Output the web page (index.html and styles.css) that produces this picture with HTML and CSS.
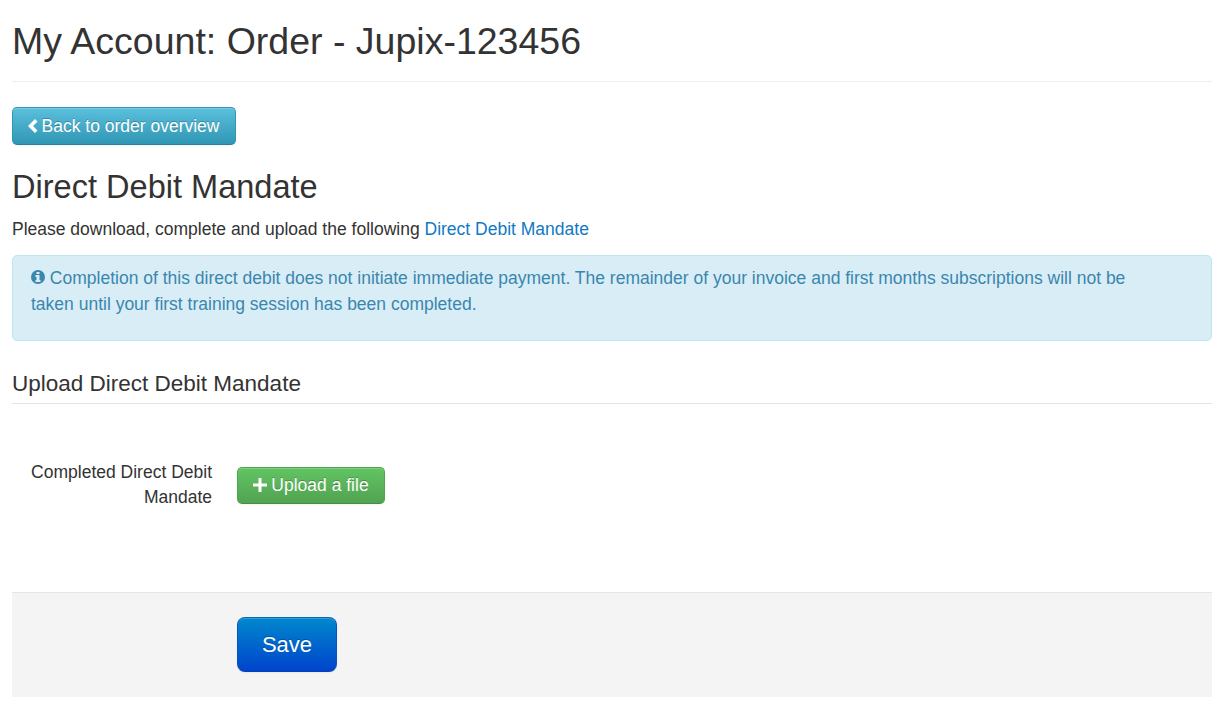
FILE: index.html
```html
<!DOCTYPE html>
<html lang="en">
<head>
    <meta charset="UTF-8">
    <meta name="viewport" content="width=device-width, initial-scale=1.0">
    <title>My Account</title>
    <link rel="stylesheet" href="styles.css">
</head>
<body>
    <div class="container">
        <div class="page-header">
            <h1>My Account: Order - Jupix-123456</h1>
        </div>

        <a href="#" class="btn btn-info"><svg class="icon-left" viewBox="0 0 10 14"><path d="M7 0L0 7l7 7 2.500-2.500L5 7l4.500-4.500z"/></svg>Back to order overview</a>

        <h2>Direct Debit Mandate</h2>
        <p class="intro">Please download, complete and upload the following <a href="#">Direct Debit Mandate</a></p>

        <div class="alert">
            <svg class="icon-info" viewBox="0 0 14 14"><circle cx="7" cy="7" r="7"/><path d="M5.500 2h3v2h-3zM4.500 5h4v5h1v2h-5v-2h1V7h-1z"/></svg>
            Completion of this direct debit does not initiate immediate payment. The remainder of your invoice and first months subscriptions will not be taken until your first training session has been completed.
        </div>

        <form>
            <h3>Upload Direct Debit Mandate</h3>
            <div class="control-group">
                <label>Completed Direct Debit Mandate</label>
                <div class="controls">
                    <button type="button" class="btn btn-success"><svg class="icon-plus" viewBox="0 0 14 14"><path d="M7 0v14M0 7h14"/></svg>Upload a file</button>
                </div>
            </div>
            <div class="form-actions">
                <button type="button" class="btn btn-primary">Save</button>
            </div>
        </form>
    </div>
</body>
</html>
```

FILE: styles.css
```css
* {
    box-sizing: border-box;
}

body {
    margin: 0;
    font-family: "Liberation Sans", Arial, sans-serif;
    font-size: 17.5px;
    line-height: 25px;
    color: #333;
    background: #fff;
}

.container {
    width: 1200px;
    margin-left: 12px;
}

h1, h2, h3 {
    margin: 0;
    font-weight: normal;
}

a {
    color: #1179c4;
    text-decoration: none;
}

.page-header {
    height: 82px;
    border-bottom: 1px solid #eee;
    margin-bottom: 25px;
}

h1 {
    padding-top: 16px;
    font-size: 37.5px;
    line-height: 50px;
}

h2 {
    margin-top: 17px;
    font-size: 32.55px;
    line-height: 50px;
}

.intro {
    margin: 5px 0 13px;
}

.btn {
    display: inline-flex;
    align-items: center;
    justify-content: center;
    border: 1px solid #2f96b4;
    border-radius: 5px;
    padding: 0;
    font-family: inherit;
    font-size: 17.5px;
    line-height: 25px;
    color: #fff;
    text-shadow: 0 -1px 0 rgba(0, 0, 0, .25);
    box-shadow: inset 0 1px 0 rgba(255, 255, 255, .2), 0 1px 2px rgba(0, 0, 0, .05);
    cursor: pointer;
}

.btn-info {
    width: 224px;
    height: 38px;
    border-color: #2f96b4 #2f96b4 #2a7f99;
    background: linear-gradient(#5bc0de, #2f96b4);
}

.btn-success {
    width: 148px;
    height: 37px;
    border-color: #51a351 #51a351 #468d46;
    background: linear-gradient(#62c462, #51a351);
}

.btn-primary {
    width: 100px;
    height: 55px;
    border-color: #0568b4 #0454c0 #0440b8;
    border-radius: 8px;
    background: linear-gradient(#08c, #04c);
    font-size: 22px;
}

.icon-left {
    width: 10px;
    height: 14px;
    margin: -1px 4px 0 -1px;
    fill: #fff;
}

.icon-plus {
    width: 14px;
    height: 14px;
    margin: -2px 4px 0 0;
    stroke: #fff;
    stroke-width: 3;
}

.icon-info {
    width: 14px;
    height: 14px;
    vertical-align: 0;
    fill: #3a87ad;
}

.icon-info path {
    fill: #d9edf7;
}

.alert {
    height: 86px;
    padding: 9px 43px 0 18px;
    border: 1px solid #bce8f1;
    border-radius: 5px;
    background: #d9edf7;
    color: #3a87ad;
    line-height: 26px;
}

h3 {
    margin-top: 25px;
    height: 38px;
    border-bottom: 1px solid #e5e5e5;
    font-size: 22.5px;
    line-height: 36px;
}

.control-group {
    display: flex;
    height: 188px;
    padding-top: 56px;
}

label {
    width: 200px;
    margin-right: 25px;
    text-align: right;
}

.controls {
    padding-top: 7px;
}

.form-actions {
    height: 105px;
    padding: 24px 0 0 225px;
    border-top: 1px solid #e5e5e5;
    background: #f4f4f4;
}
```
